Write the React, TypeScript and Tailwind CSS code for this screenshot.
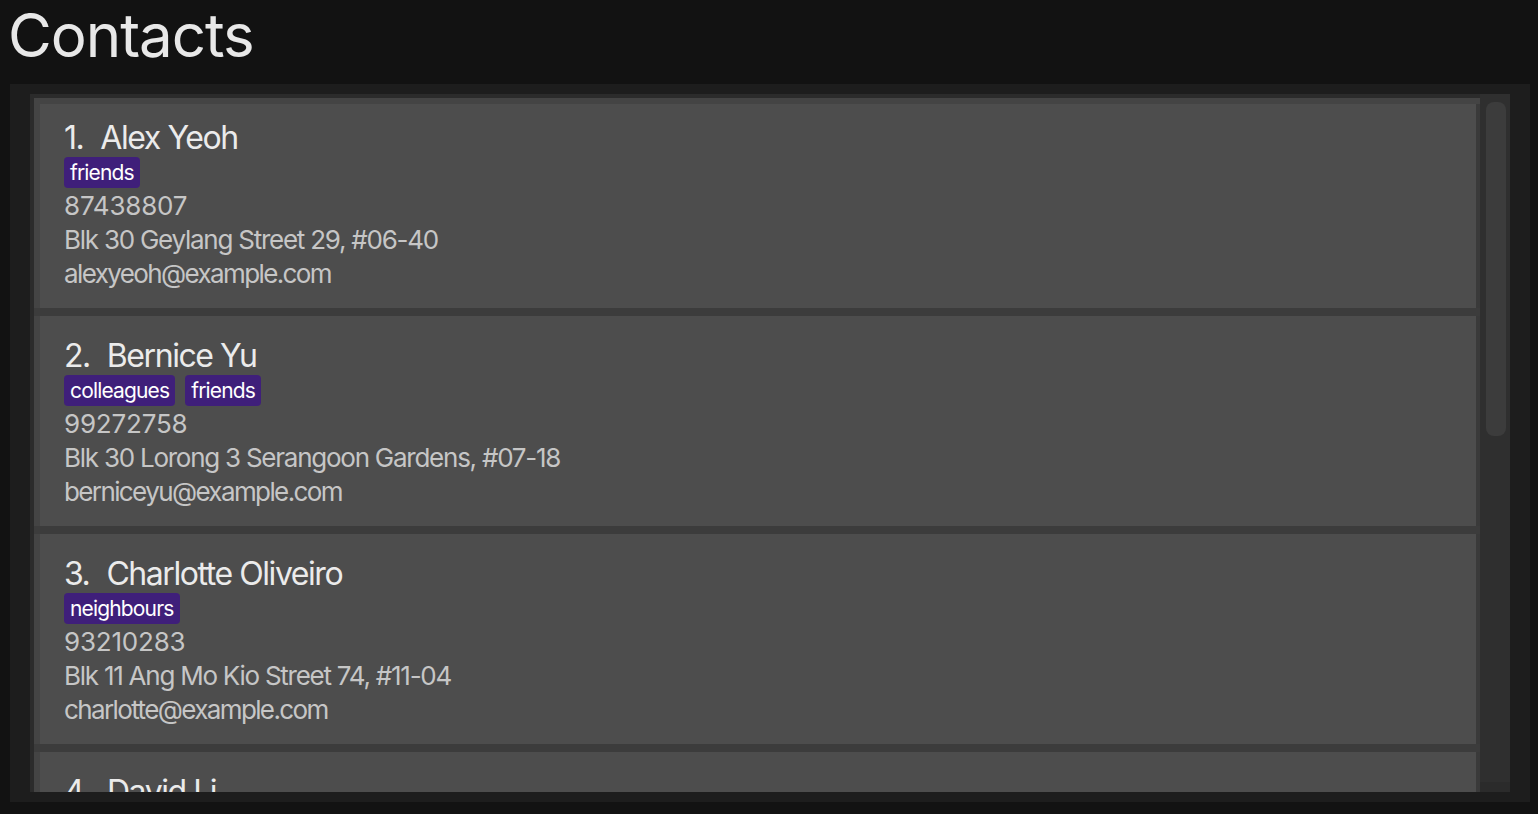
import React from "react";

type Person = {
  id: number;
  name: string;
  tags: string[];
  phone: string;
  address: string;
  email: string;
};

const people: Person[] = [
  {
    id: 1,
    name: "Alex Yeoh",
    tags: ["friends"],
    phone: "87438807",
    address: "Blk 30 Geylang Street 29, #06-40",
    email: "alexyeoh@example.com",
  },
  {
    id: 2,
    name: "Bernice Yu",
    tags: ["colleagues", "friends"],
    phone: "99272758",
    address: "Blk 30 Lorong 3 Serangoon Gardens, #07-18",
    email: "berniceyu@example.com",
  },
  {
    id: 3,
    name: "Charlotte Oliveiro",
    tags: ["neighbours"],
    phone: "93210283",
    address: "Blk 11 Ang Mo Kio Street 74, #11-04",
    email: "charlotte@example.com",
  },
  {
    id: 4,
    name: "David Li",
    tags: ["family"],
    phone: "91031282",
    address: "Blk 436 Serangoon Gardens Street 26, #16-43",
    email: "lidavid@example.com",
  },
];

const Card = ({ person, first }: { person: Person; first: boolean }) => {
  return (
    <div
      className={
        first
          ? "h-[204px] shrink-0 border-l-[6px] border-r-[4px] border-l-[#444444] border-r-[#3a3a3a] bg-[#4d4d4d] pl-[24px] pt-[14px]"
          : "h-[210px] shrink-0 border-l-[6px] border-r-[4px] border-l-[#444444] border-r-[#3a3a3a] bg-[#4d4d4d] pl-[24px] pt-[20px]"
      }
    >
      <div className="flex whitespace-nowrap text-[32px] leading-[40px] tracking-[-0.045em] text-[#ebebeb]">
        <span>{person.id}.</span>
        <span className="pl-[17px]">{person.name}</span>
      </div>
      <div className="-mt-[1px] flex gap-[10px]">
        {person.tags.map((tag) => (
          <span
            key={tag}
            className="h-[31px] rounded-[4px] bg-[#3f1f7a] px-[6px] text-[21px] leading-[31px] tracking-[-0.04em] text-white"
          >
            {tag}
          </span>
        ))}
      </div>
      <div className="mt-[1px] text-[26px] leading-[34px] text-[#c6c6c6]">
        <div className="tracking-[-0.008em]">{person.phone}</div>
        <div className="tracking-[-0.048em]">{person.address}</div>
        <div className="tracking-[-0.062em]">{person.email}</div>
      </div>
    </div>
  );
};

export default function App() {
  return (
    <div className="h-[814px] w-full overflow-hidden bg-[#121212] font-['Inter',sans-serif]">
      <h1 className="h-[84px] pl-[8px] text-[60px] leading-[70px] tracking-[-0.017em] text-[#e8e8e8]">
        Contacts
      </h1>
      <div className="ml-[10px] h-[718px] w-[1520px] bg-[#1d1d1d] px-[20px] py-[10px]">
        <div className="flex h-full overflow-hidden bg-[#2b2b2b]">
          <div className="flex w-[1450px] flex-col overflow-hidden pl-[4px] pt-[4px]">
            <div className="flex flex-col bg-[#444444] pt-[6px]">
              {people.map((p, i) => (
                <React.Fragment key={p.id}>
                  {i > 0 && <div className="h-[8px] shrink-0 bg-[#3c3c3c]" />}
                  <Card person={p} first={i === 0} />
                </React.Fragment>
              ))}
            </div>
          </div>
          <div className="flex w-[30px] flex-col">
            <div className="h-[688px] bg-[#2f2f2f] pl-[6px] pt-[8px]">
              <div className="h-[334px] w-[20px] rounded-[8px] bg-[#3c3c3c]" />
            </div>
            <div className="flex-1 bg-[#2b2b2b]" />
          </div>
        </div>
      </div>
    </div>
  );
}
